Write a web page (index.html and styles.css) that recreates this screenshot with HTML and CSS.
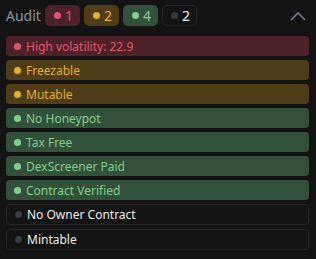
FILE: index.html
```html
<!DOCTYPE html>
<html lang="en">
<head>
<meta charset="UTF-8">
<title>Audit</title>
<link rel="stylesheet" href="styles.css">
</head>
<body>
<div class="audit">
  <div class="audit-head">
    <span class="audit-title">Audit</span>
    <span class="badge red"><i class="dot"></i>1</span>
    <span class="badge yellow"><i class="dot"></i>2</span>
    <span class="badge green"><i class="dot"></i>4</span>
    <span class="badge gray"><i class="dot"></i>2</span>
    <svg class="chevron" width="16" height="10" viewBox="0 0 16 10"><path d="M1 9 L8 2 L15 9" fill="none" stroke="#6f7a8c" stroke-width="1.6"/></svg>
  </div>
  <div class="audit-list">
    <div class="item red"><i class="dot"></i>High volatility: 22.9</div>
    <div class="item yellow"><i class="dot"></i>Freezable</div>
    <div class="item yellow"><i class="dot"></i>Mutable</div>
    <div class="item green"><i class="dot"></i>No Honeypot</div>
    <div class="item green"><i class="dot"></i>Tax Free</div>
    <div class="item green"><i class="dot"></i>DexScreener Paid</div>
    <div class="item green"><i class="dot"></i>Contract Verified</div>
    <div class="item gray"><i class="dot"></i>No Owner Contract</div>
    <div class="item gray"><i class="dot"></i>Mintable</div>
  </div>
</div>
</body>
</html>
```

FILE: styles.css
```css
body {
  margin: 0;
  background: #131313;
  font-family: "Noto Sans", "Open Sans", sans-serif;
}
.audit {
  padding: 5px 7px 0 6px;
}
.audit-head {
  display: flex;
  align-items: center;
  gap: 4px;
  height: 21px;
  margin-bottom: 10px;
}
.audit-title {
  color: #8a93a3;
  font-size: 14px;
}
.badge {
  display: flex;
  align-items: center;
  gap: 4px;
  width: 35px;
  height: 21px;
  box-sizing: border-box;
  padding-left: 8px;
  border: 1px solid transparent;
  border-radius: 5px;
  font-size: 14px;
}
.chevron {
  margin-left: auto;
  margin-right: 3px;
}
.dot {
  width: 7px;
  height: 7px;
  border-radius: 50%;
  flex: none;
}
.audit-list {
  display: flex;
  flex-direction: column;
  gap: 4px;
}
.item {
  display: flex;
  align-items: center;
  gap: 5px;
  height: 20px;
  box-sizing: border-box;
  padding: 0 7px;
  border-radius: 4px;
  border: 1px solid transparent;
  font-size: 12px;
}
.red { background: #4d2128; color: #e2566a; }
.red .dot { background: #e2566a; }
.yellow { background: #4e3d16; color: #e6ae2f; }
.yellow .dot { background: #e6ae2f; }
.green { background: #33503a; color: #80cf8c; }
.green .dot { background: #80cf8c; }
.gray { background: #131313; color: #ededed; border-color: #262626; }
.gray .dot { background: #373a41; }
.item.gray { height: 21px; padding-left: 8px; }
```
